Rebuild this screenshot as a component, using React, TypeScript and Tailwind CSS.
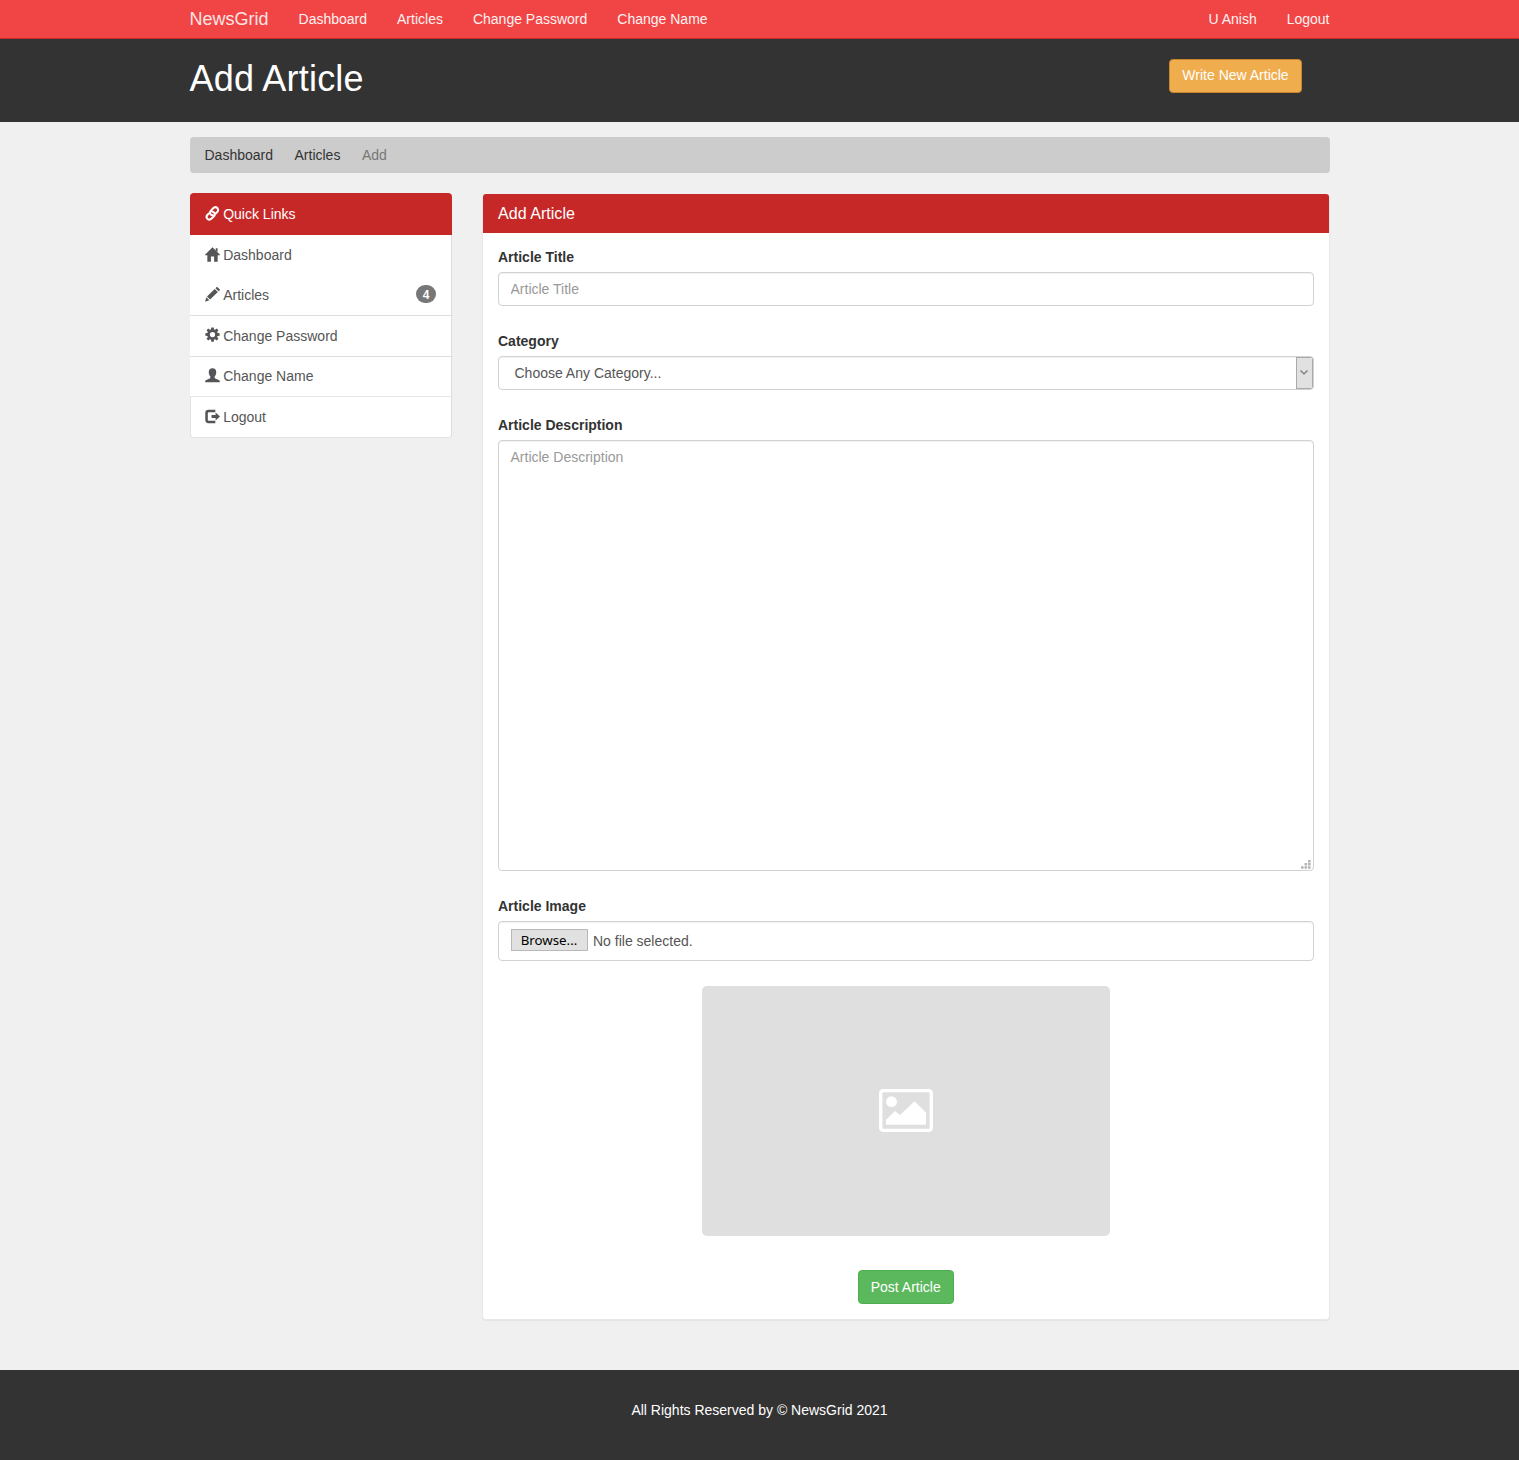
import type { ReactNode } from "react";

const icons: Record<string, ReactNode> = {
  home: <path d="M8 .2 16 8.200v.6H13.500V15.600H9.700V10H6.300V15.600H2.500V8.800H0V8.200L8 .2Z M11.400 1.400h2v4l-2-2Z" />,
  pencil: <path d="m13.400.3 2.200 2.100c.4.4.4.8 0 1.200l-1.100 1-3.400-3.300L12.200.3c.4-.4.8-.4 1.200 0ZM10.300 2.100l3.400 3.300-8.300 8-3.300-3.300 8.200-8ZM1.400 10.900l3.200 3.200L.1 15.600l1.300-4.700Z" />,
  cog: (
    <path
      fillRule="evenodd"
      d="m6.700.4 2.600 0 .4 2.200 1 .4 1.900-1.300 1.700 1.700-1.300 1.900.4 1 2.200.4v2.600l-2.200.4-.4 1 1.300 1.900-1.700 1.700-1.900-1.300-1 .4-.4 2.200H6.700l-.4-2.200-1-.4-1.900 1.300-1.700-1.700L3 10.700l-.4-1L.4 9.300V6.700l2.200-.4.4-1-1.300-1.900 1.700-1.700L5.300 3l1-.4ZM8 5.200a2.800 2.800 0 1 0 0 5.600 2.800 2.800 0 0 0 0-5.600Z"
    />
  ),
  user: <path d="M8 .3c2.600 0 4 1.700 4 4.100 0 2-.8 3.700-1.700 4.700v1.300c0 .5.300.7.8.9l3.500 1.500c.8.4 1.200.8 1.200 1.400v1H.2v-1c0-.6.4-1 1.200-1.400l3.500-1.500c.5-.2.8-.4.8-.9V9.100C4.800 8.100 4 6.400 4 4.400 4 2 5.400.3 8 .3Z" />,
  logout: <path d="M3.600.9H11v2.500H4.200c-.8 0-1.200.4-1.200 1.200v6.800c0 .8.4 1.200 1.200 1.200H11v2.500H3.600C1.500 15.100.3 13.900.3 11.800V4.200C.3 2.100 1.500.9 3.600.9ZM11.300 3.700 16 8l-4.700 4.300V9.600H7V6.400h4.300Z" />,
};

function Glyph({ name }: { name: string }) {
  return (
    <svg viewBox="0 0 16 16" className={`mr-[3px] h-[15px] w-[15px] shrink-0 ${name === "logout" ? "" : "mb-0.5"}`} fill="currentColor">
      {icons[name]}
    </svg>
  );
}

function LinkGlyph() {
  return (
    <svg viewBox="0 0 16 16" className="mr-[3px] mb-px h-[15px] w-[15px] shrink-0" fill="none" stroke="currentColor" strokeWidth="2.200" strokeLinecap="round">
      <path d="M8.300 10C5 9.400 4.600 6.800 6.300 4.900L8.700 2.400c1.300-1.300 3.200-1.400 4.400-.3 1.200 1.200 1.200 3-.1 4.300l-1.300 1.400" />
      <path d="M7.400 5.800c3.300.6 3.800 3.200 2.100 5.100L7 13.400c-1.300 1.300-3.200 1.400-4.400.3-1.200-1.200-1.100-3 .1-4.300l1.200-1.300" />
    </svg>
  );
}

const rows = [
  { icon: "home", label: "Dashboard", edge: "" },
  { icon: "pencil", label: "Articles", edge: "border-b border-b-[#ddd]", badge: "4" },
  { icon: "cog", label: "Change Password", edge: "border-b border-b-[#ddd]" },
  { icon: "user", label: "Change Name", edge: "border-b border-b-[#e6e6e6]" },
  { icon: "logout", label: "Logout", edge: "rounded-b border-b border-b-[#e2e2e2] border-l border-l-[#e2e2e2]" },
];

const field = "w-full rounded border border-[#d2d2d2] bg-white shadow-[inset_0_1px_1px_rgba(0,0,0,0.06)] outline-none";

function Label({ children }: { children: ReactNode }) {
  return <div className="mb-[5px] h-5 font-bold text-[#333]">{children}</div>;
}

export default function App() {
  return (
    <div className="h-[1460px] w-[1519px] overflow-hidden bg-[#f0f0f0] font-['Liberation_Sans',Arial,sans-serif] text-[14px] leading-5 text-[#333]">
      <nav className="h-[39px] border-b border-[#c62828] bg-[#f14545] text-[#fff2f2]">
        <div className="mx-auto flex h-[38px] w-[1140px] items-center gap-[30px]">
          <span className="text-[18px] text-[#fbe4e4]">NewsGrid</span>
          <span>Dashboard</span>
          <span>Articles</span>
          <span>Change Password</span>
          <span>Change Name</span>
          <span className="ml-auto">U Anish</span>
          <span>Logout</span>
        </div>
      </nav>

      <header className="h-[83px] bg-[#333]">
        <div className="mx-auto flex w-[1140px] justify-between">
          <h1 className="pt-5 text-[36px] leading-10 tracking-[0.2px] text-white">Add Article</h1>
          <button className="mt-[19.500px] mr-[27.500px] h-[34px] w-[133px] rounded border border-[#c8872f] bg-[#f0ad4e] pb-0.5 text-white">Write New Article</button>
        </div>
      </header>

      <main className="mx-auto h-[1248px] w-[1140px] pt-[15px]">
        <div className="flex h-9 items-center gap-[21.500px] rounded bg-[#ccc] px-[15px]">
          <span>Dashboard</span>
          <span>Articles</span>
          <span className="text-[#777]">Add</span>
        </div>

        <div className="mt-5 flex items-start gap-[30px]">
          <aside className="w-[262.500px] text-[#555]">
            <div className="flex h-[42px] items-center rounded-t bg-[#c62828] px-[15.700px] text-white">
              <LinkGlyph />
              Quick Links
            </div>
            {rows.map((r) => (
              <div key={r.label} className={`flex h-[40.500px] items-center border-r border-r-[#ddd] bg-white ${r.icon === "logout" ? "pl-[14.700px]" : "pl-[15.700px]"} pr-[15px] ${r.edge}`}>
                <Glyph name={r.icon} />
                <span>{r.label}</span>
                {r.badge && (
                  <span className="mb-0.5 ml-auto flex h-[18px] w-5 items-center justify-center rounded-full bg-[#777] pt-px text-[12px] leading-3 font-bold text-white">{r.badge}</span>
                )}
              </div>
            ))}
          </aside>

          <section className="mt-[0.500px] h-[1126px] w-[847.500px] rounded border border-t-0 border-[#e8e8e8] bg-white shadow-[0_1px_1px_rgba(0,0,0,0.05)]">
            <div className="flex h-[39px] items-center rounded-t-[3px] bg-[#c62828] px-[15px] pt-px text-[16px] tracking-[0.04px] text-white">Add Article</div>
            <div className="px-[15px] pt-[14px]">
              <Label>Article Title</Label>
              <input className={`${field} block h-[34px] px-[11.500px] placeholder:text-[#999]`} placeholder="Article Title" />

              <div className="mt-[25px]">
                <Label>Category</Label>
                <div className={`${field} flex h-[34px] items-center overflow-hidden pl-[15.500px] text-[#555]`}>
                  <span>Choose Any Category...</span>
                  <span className="ml-auto flex h-8 w-[17px] items-center justify-center border border-[#aaa] bg-[#e1e1e1]">
                    <svg viewBox="0 0 8 5" className="h-[5px] w-2" fill="none" stroke="#777" strokeWidth="1.200">
                      <path d="m.5.500 3.500 3.500L7.500.5" />
                    </svg>
                  </span>
                </div>
              </div>

              <div className="mt-[25px]">
                <Label>Article Description</Label>
                <div className="relative">
                  <textarea className={`${field} block h-[431px] resize-none px-[11.500px] py-1.5 placeholder:text-[#999]`} placeholder="Article Description" />
                  <svg viewBox="0 0 10 9" className="absolute right-[2.500px] bottom-0.5 h-[9px] w-[10px]" fill="#b5b5b5">
                    <path d="M7 0h2.600v2.400H7zM3.500 3.100h2.600v2.400H3.500zM7 3.100h2.600v2.400H7zM0 6.300h2.600v2.500H0zM3.500 6.300h2.600v2.500H3.500zM7 6.300h2.600v2.500H7z" />
                  </svg>
                </div>
              </div>

              <div className="mt-[25px]">
                <Label>Article Image</Label>
                <div className={`${field} flex h-10 items-start px-3 pt-[7px] text-[#555]`}>
                  <button className="h-[22px] w-[77px] border border-[#b8b8b8] bg-[#e1e1e1] pr-px font-['Noto_Sans',sans-serif] text-[13.300px] leading-[21px] text-black">Browse...</button>
                  <span className="ml-[5px] pt-[2px]">No file selected.</span>
                </div>
              </div>

              <div className="mx-auto mt-[25px] flex h-[250px] w-[408px] items-center justify-center rounded-[5px] bg-[#dfdfdf]">
                <svg viewBox="0 0 54 44" preserveAspectRatio="none" className="mb-px h-[43px] w-[54px]">
                  <rect x="1.700" y="1.700" width="50.600" height="40.600" rx="2.500" fill="none" stroke="#fff" strokeWidth="3.400" />
                  <circle cx="12.500" cy="13" r="5.500" fill="#fff" />
                  <path d="M7 36.500v-5l9-9 5 4 14.500-14L47 24V36.500Z" fill="#fff" />
                </svg>
              </div>
              <button className="mx-auto mt-[34px] block h-[34px] w-24 rounded border border-[#4cae4c] bg-[#5cb85c] text-white">Post Article</button>
            </div>
          </section>
        </div>
      </main>

      <footer className="flex h-[90px] items-center justify-center bg-[#333] pb-[10px] text-white">All Rights Reserved by © NewsGrid 2021</footer>
    </div>
  );
}
